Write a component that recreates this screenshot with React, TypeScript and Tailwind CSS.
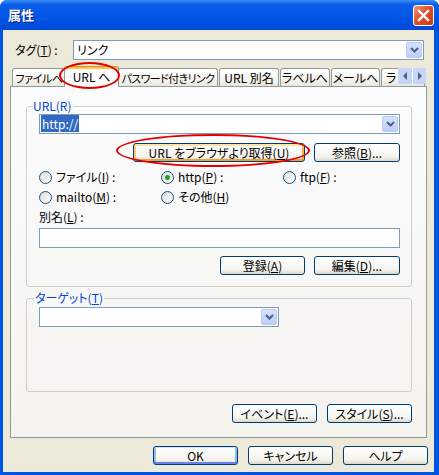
import type { ReactNode } from 'react';

// Windows XP style "属性" dialog

function U({ children }: { children: ReactNode }) {
  return <span className="underline underline-offset-[1px]">{children}</span>;
}

function Chevron() {
  return (
    <svg width="9" height="6" viewBox="0 0 9 6" className="block">
      <polyline points="1,1 4.5,4.5 8,1" fill="none" stroke="#4d6185" strokeWidth="2" />
    </svg>
  );
}

function DropBtn() {
  return (
    <div className="mr-[1px] flex h-[16px] w-[16px] items-center justify-center rounded-[2px] border border-[#bccbf0] bg-[linear-gradient(180deg,#d7e2fc,#bccdf6)]">
      <Chevron />
    </div>
  );
}

function Combo({ className, children }: { className: string; children?: ReactNode }) {
  return (
    <div className={`flex h-[20px] items-center border border-[#7f9db9] bg-white ${className}`}>
      <div className="flex-1 pl-[2px]">{children}</div>
      <DropBtn />
    </div>
  );
}

function Btn({
  className,
  kind = 'normal',
  children,
}: {
  className: string;
  kind?: 'normal' | 'hot' | 'default';
  children: ReactNode;
}) {
  const ring =
    kind === 'hot'
      ? 'shadow-[inset_0_2px_0_#ffe4a8,inset_0_-2px_0_#f0a135,inset_2px_0_0_#fbca6a,inset_-2px_0_0_#f6b24a]'
      : kind === 'default'
        ? 'shadow-[inset_0_1px_0_#cee7ff,inset_0_-2px_0_#6982ee,inset_2px_0_0_#98b8ea,inset_-2px_0_0_#98b8ea]'
        : '';
  return (
    <div
      className={`flex h-[19px] items-center justify-center rounded-[3px] border border-[#003c74] bg-[linear-gradient(180deg,#ffffff,#f5f4ef_75%,#dcd7cb)] text-black ${ring} ${className}`}
    >
      {children}
    </div>
  );
}

function Radio({ checked, children }: { checked?: boolean; children: ReactNode }) {
  return (
    <div className="flex h-[20px] items-center gap-[4px]">
      <span className="flex h-[13px] w-[13px] items-center justify-center rounded-full border border-[#1c5180] bg-[linear-gradient(135deg,#dcdcd7,#ffffff)]">
        {checked && <span className="h-[5px] w-[5px] rounded-full bg-[#21a121]" />}
      </span>
      <span>{children}</span>
    </div>
  );
}

function Tab({ className, children }: { className: string; children: ReactNode }) {
  return (
    <div
      className={`flex h-[18px] items-center justify-center overflow-hidden whitespace-nowrap rounded-t-[3px] border border-b-0 border-[#919b9c] bg-[linear-gradient(180deg,#ffffff,#f3f2ec_70%,#e8e6dc)] ${className}`}
    >
      {children}
    </div>
  );
}

export default function App() {
  return (
    <div className="relative flex h-[475px] w-[439px] flex-col overflow-hidden rounded-t-[7px] bg-[#0054e3] font-['Noto_Sans_CJK_JP',sans-serif] text-[12px] leading-[14px] text-black [font-feature-settings:'palt']">
      {/* Title bar */}
      <div className="flex h-[30px] items-center justify-between bg-[linear-gradient(180deg,#3d8ef8,#0a5ee9_15%,#0055e5_60%,#004ad8)]">
        <span className="pl-[8px] text-[13px] font-bold text-white [text-shadow:1px_1px_#0a1883]">属性</span>
        <div className="mr-[5px] flex h-[21px] w-[21px] items-center justify-center rounded-[3px] border border-white bg-[linear-gradient(135deg,#f09878,#e2502c_45%,#c93b14)]">
          <svg width="13" height="13" viewBox="0 0 13 13">
            <path d="M2 2 L11 11 M11 2 L2 11" stroke="white" strokeWidth="2.4" strokeLinecap="square" />
          </svg>
        </div>
      </div>

      {/* Body */}
      <div className="mb-[3px] ml-[3px] mr-[5px] flex flex-1 flex-col bg-[#ece9d8]">
        {/* Tag row */}
        <div className="mt-[10px] flex h-[20px] items-center">
          <span className="w-[70px] pl-[12px]">
            タグ(<U>T</U>) :
          </span>
          <Combo className="w-[351px]">
            <span className="pl-[1px]">リンク</span>
          </Combo>
        </div>

        {/* Tabs */}
        <div className="relative z-10 ml-[9px] mt-[6px] flex h-[20px] w-[416px] items-end">
          <Tab className="w-[54px] text-[11px] tracking-[-0.4px]">ファイルへ</Tab>
          <div className="relative -mb-[1px] -ml-[2px] flex h-[21px] w-[55px] items-center justify-center rounded-t-[3px] border border-b-0 border-[#919b9c] border-t-[#e68b2c] bg-[#fcfcfe] shadow-[inset_0_2px_0_#ffc73c]">
            URL へ
          </div>
          <Tab className="-ml-[1px] w-[100px] text-[11px] tracking-[-0.6px]">パスワード付きリンク</Tab>
          <Tab className="ml-[1px] w-[60px]">URL 別名</Tab>
          <Tab className="ml-[1px] w-[50px]">ラベルへ</Tab>
          <Tab className="ml-[1px] w-[49px]">メールへ</Tab>
          <Tab className="ml-[1px] w-[44px] !justify-start pl-[4px]">ラ</Tab>
          <div className="absolute right-[2px] top-[2px] flex h-[16px]">
            <div className="flex w-[14px] items-center justify-center bg-[#c6d5f8]">
              <svg width="5" height="8" viewBox="0 0 5 8">
                <polygon points="4,0 0,4 4,8" fill="#4d6185" />
              </svg>
            </div>
            <div className="flex w-[14px] items-center justify-center border-l border-white bg-[#c6d5f8]">
              <svg width="5" height="8" viewBox="0 0 5 8">
                <polygon points="1,0 5,4 1,8" fill="#4d6185" />
              </svg>
            </div>
          </div>
        </div>

        {/* Tab panel */}
        <div className="ml-[7px] flex h-[352px] w-[417px] flex-col border border-[#919b9c] bg-[linear-gradient(180deg,#fcfcfe,#f4f3ee)]">
          {/* URL group */}
          <fieldset className="ml-[15px] mr-[14px] mt-[12px] rounded-[3px] border border-[#d0d0bf] pb-[11px] pl-[12px] pr-[11px]">
            <legend className="-ml-[7px] px-[1px] leading-[14px] text-[#0046d5]">URL(R)</legend>
            <div className="mt-[1px] flex h-[20px] items-center border border-[#7f9db9] bg-white">
              <div className="flex-1 pl-[1px]">
                <span className="bg-[#316ac5] px-[1px] text-white">http://</span>
              </div>
              <DropBtn />
            </div>
            <div className="mt-[9px] flex justify-end gap-[9px]">
              <Btn className="w-[172px]" kind="hot">
                URL をブラウザより取得(<U>U</U>)
              </Btn>
              <Btn className="w-[86px]">
                参照(<U>B</U>)...
              </Btn>
            </div>
            <div className="mt-[5px] grid grid-cols-[122px_122px_1fr]">
              <Radio>
                ファイル(<U>I</U>) :
              </Radio>
              <Radio checked>
                http(<U>P</U>) :
              </Radio>
              <Radio>
                ftp(<U>F</U>) :
              </Radio>
              <Radio>
                mailto(<U>M</U>) :
              </Radio>
              <Radio>
                その他(<U>H</U>)
              </Radio>
            </div>
            <div className="mt-[2px] flex h-[16px] items-center">
              別名(<U>L</U>) :
            </div>
            <div className="mt-[3px] h-[20px] border border-[#7f9db9] bg-white" />
            <div className="mt-[8px] flex justify-end gap-[9px]">
              <Btn className="w-[85px]">
                登録(<U>A</U>)
              </Btn>
              <Btn className="w-[86px]">
                編集(<U>D</U>)...
              </Btn>
            </div>
          </fieldset>

          {/* Target group */}
          <fieldset className="ml-[15px] mr-[14px] mt-[4px] rounded-[3px] border border-[#d0d0bf] pb-[64px] pl-[12px] pr-[11px]">
            <legend className="-ml-[5px] px-[1px] leading-[14px] text-[#0046d5]">
              ターゲット(<U>T</U>)
            </legend>
            <Combo className="mt-[2px] w-[240px]" />
          </fieldset>

          <div className="mr-[14px] mt-[12px] flex justify-end gap-[10px]">
            <Btn className="w-[85px]">
              イベント(<U>E</U>)...
            </Btn>
            <Btn className="w-[85px]">
              スタイル(<U>S</U>)...
            </Btn>
          </div>
        </div>

        {/* Dialog buttons */}
        <div className="mt-[8px] flex justify-end gap-[10px] pr-[6px]">
          <Btn className="w-[85px]" kind="default">
            OK
          </Btn>
          <Btn className="w-[85px]">キャンセル</Btn>
          <Btn className="w-[85px]">ヘルプ</Btn>
        </div>
      </div>

      {/* Red annotation ellipses */}
      <div className="pointer-events-none absolute left-[59px] top-[62px] z-20 h-[27px] w-[61px] rounded-[50%] border-2 border-[#e00000]" />
      <div className="pointer-events-none absolute left-[116px] top-[134px] z-20 h-[33px] w-[194px] rounded-[50%] border-2 border-[#e00000]" />
    </div>
  );
}
